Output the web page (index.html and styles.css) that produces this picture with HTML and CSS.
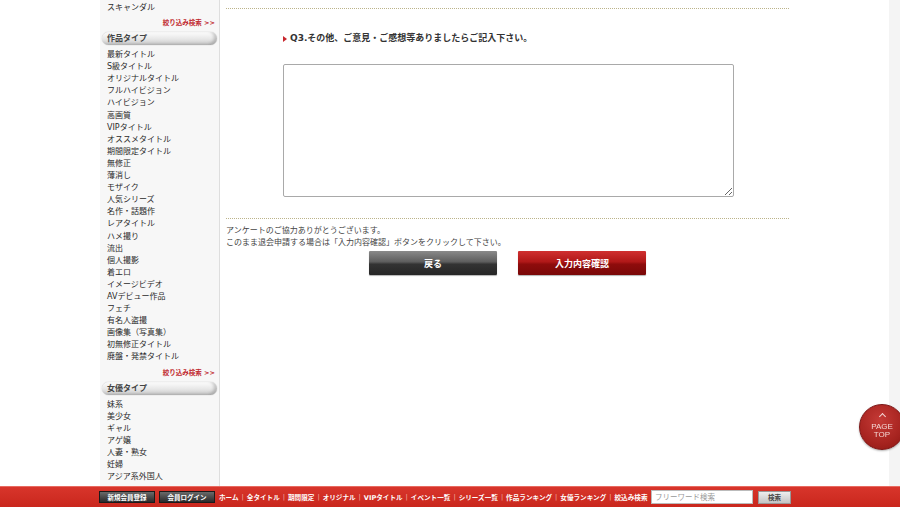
FILE: index.html
```html
<!DOCTYPE html>
<html lang="ja">
<head>
    <meta charset="UTF-8">
    <title>退会アンケート</title>
    <link rel="stylesheet" href="styles.css">
</head>
<body>
    <div class="page">
        <div class="gutter"></div>

        <aside class="sidebar">
            <ul class="cat-list">
                <li>スキャンダル</li>
            </ul>
            <div class="more">絞り込み検索 &gt;&gt;</div>
            <h3 class="cat-head">作品タイプ</h3>
            <ul class="cat-list">
                <li>最新タイトル</li>
                <li>S級タイトル</li>
                <li>オリジナルタイトル</li>
                <li>フルハイビジョン</li>
                <li>ハイビジョン</li>
                <li>高画質</li>
                <li>VIPタイトル</li>
                <li>オススメタイトル</li>
                <li>期間限定タイトル</li>
                <li>無修正</li>
                <li>薄消し</li>
                <li>モザイク</li>
                <li>人気シリーズ</li>
                <li>名作・話題作</li>
                <li>レアタイトル</li>
                <li>ハメ撮り</li>
                <li>流出</li>
                <li>個人撮影</li>
                <li>着エロ</li>
                <li>イメージビデオ</li>
                <li>AVデビュー作品</li>
                <li>フェチ</li>
                <li>有名人盗撮</li>
                <li>画像集（写真集）</li>
                <li>初無修正タイトル</li>
                <li>廃盤・発禁タイトル</li>
            </ul>
            <div class="more">絞り込み検索 &gt;&gt;</div>
            <h3 class="cat-head">女優タイプ</h3>
            <ul class="cat-list">
                <li>妹系</li>
                <li>美少女</li>
                <li>ギャル</li>
                <li>アゲ嬢</li>
                <li>人妻・熟女</li>
                <li>妊婦</li>
                <li>アジア系外国人</li>
                <li>金髪外国人</li>
            </ul>
        </aside>

        <main class="main">
            <div class="q-block">
                <p class="q-title"><span class="arrow"></span>Q3.その他、ご意見・ご感想等ありましたらご記入下さい。</p>
                <textarea class="q-text"></textarea>
            </div>
            <div class="notice">
                <p>アンケートのご協力ありがとうございます。</p>
                <p>このまま退会申請する場合は「入力内容確認」ボタンをクリックして下さい。</p>
            </div>
            <div class="actions">
                <button class="btn btn-back">戻る</button>
                <button class="btn btn-confirm">入力内容確認</button>
            </div>
        </main>

        <div class="strip"></div>
    </div>

    <a class="page-top" href="#">
        <span class="caret"></span>
        PAGE<br>TOP
    </a>

    <footer class="footer">
        <div class="footer-inner">
            <a class="foot-btn" href="#">新規会員登録</a>
            <a class="foot-btn" href="#">会員ログイン</a>
            <nav class="foot-nav">
                <a href="#">ホーム</a><span>|</span>
                <a href="#">全タイトル</a><span>|</span>
                <a href="#">期間限定</a><span>|</span>
                <a href="#">オリジナル</a><span>|</span>
                <a href="#">VIPタイトル</a><span>|</span>
                <a href="#">イベント一覧</a><span>|</span>
                <a href="#">シリーズ一覧</a><span>|</span>
                <a href="#">作品ランキング</a><span>|</span>
                <a href="#">女優ランキング</a><span>|</span>
                <a href="#">絞込み検索</a>
            </nav>
            <input class="search" type="text" placeholder="フリーワード検索">
            <button class="search-btn">検索</button>
        </div>
    </footer>
</body>
</html>
```

FILE: styles.css
```css
body {
    margin: 0;
    padding: 0;
    background: #ffffff;
    color: #333333;
    font-family: Verdana, "DejaVu Sans", "Noto Sans CJK JP", sans-serif;
    overflow: hidden;
    height: 507px;
}
ul, p, h3 {
    margin: 0;
    padding: 0;
}
a {
    text-decoration: none;
}
.page {
    display: flex;
    width: 900px;
    height: 507px;
}
.gutter {
    width: 100px;
    flex: none;
}
.sidebar {
    width: 119px;
    flex: none;
    background: #f7f7f7;
    border-right: 1px solid #dedede;
    padding-top: 2px;
}
.cat-list {
    list-style: none;
    padding-left: 7px;
    font-size: 8px;
    line-height: 12.1px;
    color: #2a2a2a;
}
.cat-list:last-child {
    height: 84px;
    overflow: hidden;
}
.more {
    margin-top: 3px;
    height: 12px;
    line-height: 12px;
    text-align: right;
    padding-right: 4px;
    font-size: 6.5px;
    font-weight: bold;
    color: #c0262c;
}
.cat-head {
    margin: 3px 2px 4px 2px;
    height: 13px;
    line-height: 13px;
    padding-left: 5px;
    font-size: 8px;
    font-weight: bold;
    color: #444444;
    border-radius: 7px;
    background: linear-gradient(#fdfdfd 0%, #e6e6e6 55%, #c9c9c9 100%);
    box-shadow: inset -3px -1px 3px rgba(0,0,0,0.18), 0 0 1px rgba(0,0,0,0.35);
}
.main {
    width: 563px;
    flex: none;
    padding: 8px 100px 0 6px;
}
.q-block {
    border-top: 1px dotted #bcb48a;
    border-bottom: 1px dotted #bcb48a;
    padding: 22px 0 21px 57px;
}
.q-title {
    height: 14px;
    line-height: 14px;
    font-size: 9px;
    font-weight: bold;
    color: #333333;
}
.arrow {
    display: inline-block;
    width: 0;
    height: 0;
    border-left: 4px solid #c8262c;
    border-top: 3px solid transparent;
    border-bottom: 3px solid transparent;
    margin-right: 3px;
    vertical-align: -1px;
}
.q-text {
    display: block;
    box-sizing: border-box;
    margin-top: 19px;
    width: 451px;
    height: 133px;
    border: 1px solid #a9a9a9;
    border-radius: 2px;
}
.notice {
    padding-top: 6px;
    font-size: 8px;
    line-height: 12px;
    color: #444444;
}
.actions {
    display: flex;
    justify-content: center;
    gap: 21px;
    margin-top: 2px;
}
.btn {
    width: 128px;
    height: 24px;
    border: none;
    border-radius: 1px;
    color: #ffffff;
    font-family: Verdana, "DejaVu Sans", "Noto Sans CJK JP", sans-serif;
    font-size: 9px;
    font-weight: bold;
    cursor: pointer;
    box-shadow: 0 1px 1px rgba(0,0,0,0.3);
}
.btn-back {
    background: linear-gradient(#8a8a8a 0%, #5e5e5e 45%, #333333 55%, #262626 100%);
}
.btn-confirm {
    background: linear-gradient(#d03030 0%, #b01818 45%, #8e0c0c 55%, #7a0808 100%);
}
.strip {
    flex: 1;
    background: #f4f4f4;
}
.page-top {
    position: fixed;
    left: 859px;
    top: 404px;
    width: 46px;
    height: 46px;
    border-radius: 50%;
    box-sizing: border-box;
    border: 1px solid #7a1414;
    background: radial-gradient(circle at 45% 35%, #c53a36 0%, #a72420 60%, #8a1612 100%);
    color: #f3d6d4;
    font-family: "Liberation Sans", Arial, sans-serif;
    font-size: 8px;
    line-height: 8px;
    text-align: center;
    padding-top: 9px;
    box-shadow: 0 1px 2px rgba(0,0,0,0.3);
}
.caret {
    display: block;
    width: 4px;
    height: 4px;
    margin: 0 auto 4px;
    border-left: 1px solid #f3d6d4;
    border-top: 1px solid #f3d6d4;
    transform: rotate(45deg);
}
.footer {
    position: fixed;
    left: 0;
    bottom: 0;
    width: 900px;
    height: 20px;
    background: linear-gradient(#d8352b, #c9271d);
    border-top: 1px solid #e86a60;
}
.footer-inner {
    display: flex;
    align-items: center;
    height: 20px;
    padding-left: 99px;
}
.foot-btn {
    width: 56px;
    height: 12px;
    line-height: 12px;
    margin-right: 4px;
    text-align: center;
    font-size: 6.5px;
    font-weight: bold;
    color: #ffffff;
    background: linear-gradient(#6a6a6a, #2a2a2a);
    border: 1px solid #1a1a1a;
    box-sizing: border-box;
}
.foot-nav {
    display: flex;
    align-items: center;
    width: 432px;
    font-size: 6.6px;
    font-weight: bold;
    color: #ffffff;
}
.foot-nav a {
    color: #ffffff;
}
.foot-nav span {
    margin: 0 3px;
    font-weight: normal;
    color: #f1b0a8;
}
.search {
    box-sizing: border-box;
    width: 102px;
    height: 14px;
    margin-left: 0;
    padding: 0 3px;
    border: 1px solid #bbbbbb;
    font-size: 7.5px;
    font-family: Verdana, "DejaVu Sans", "Noto Sans CJK JP", sans-serif;
}
.search::placeholder {
    color: #999999;
}
.search-btn {
    width: 33px;
    height: 13px;
    margin-left: 5px;
    padding: 0;
    border: 1px solid #999999;
    background: linear-gradient(#eeeeee, #c4c4c4);
    font-size: 6.5px;
    font-weight: bold;
    color: #444444;
    font-family: Verdana, "DejaVu Sans", "Noto Sans CJK JP", sans-serif;
}
```
